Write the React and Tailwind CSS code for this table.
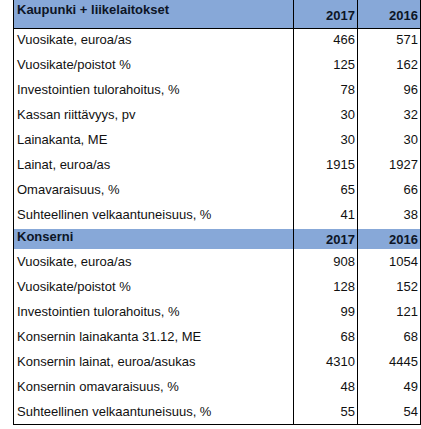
const kaupunki = [
  ['Vuosikate, euroa/as', '466', '571'],
  ['Vuosikate/poistot %', '125', '162'],
  ['Investointien tulorahoitus, %', '78', '96'],
  ['Kassan riittävyys, pv', '30', '32'],
  ['Lainakanta, ME', '30', '30'],
  ['Lainat, euroa/as', '1915', '1927'],
  ['Omavaraisuus, %', '65', '66'],
  ['Suhteellinen velkaantuneisuus, %', '41', '38'],
]

const konserni = [
  ['Vuosikate, euroa/as', '908', '1054'],
  ['Vuosikate/poistot %', '128', '152'],
  ['Investointien tulorahoitus, %', '99', '121'],
  ['Konsernin lainakanta 31.12, ME', '68', '68'],
  ['Konsernin lainat, euroa/asukas', '4310', '4445'],
  ['Konsernin omavaraisuus, %', '48', '49'],
  ['Suhteellinen velkaantuneisuus, %', '55', '54'],
]

function Row({ label, a, b, lift }) {
  const pad = lift ? 'pb-[4px]' : 'pt-[1px]'
  return (
    <div className="grid h-[25px] grid-cols-[279px_64px_63px]">
      <div className={`flex items-center pl-[3px] ${pad}`}>{label}</div>
      <div className={`flex items-center justify-end border-l border-black pr-[2px] ${pad}`}>{a}</div>
      <div className={`flex items-center justify-end border-l border-black pr-[2px] ${pad}`}>{b}</div>
    </div>
  )
}

function Header({ title, tall }) {
  return (
    <div
      className={`grid grid-cols-[279px_64px_63px] bg-[#87a8d8] font-bold text-[#0d1526] ${
        tall ? 'h-[29px] border-b border-black' : 'h-[20px]'
      }`}
    >
      <div className={`pl-[3px] ${tall ? 'pt-[2px]' : 'pt-0'}`}>{title}</div>
      <div className={`flex items-end justify-end border-l border-black pr-[2px] ${tall ? 'pb-[4px]' : 'pb-[1px]'}`}>
        2017
      </div>
      <div className={`flex items-end justify-end border-l border-black pr-[2px] ${tall ? 'pb-[4px]' : 'pb-[1px]'}`}>
        2016
      </div>
    </div>
  )
}

export default function App() {
  return (
    <div className="h-[429px] w-[421px] overflow-hidden bg-white">
      <div
        className="ml-[13px] w-[408px] border-x border-b border-black text-[13px] leading-[16px] text-[#111]"
        style={{ fontFamily: '"Liberation Sans", Arial, sans-serif' }}
      >
        <Header title="Kaupunki + liikelaitokset" tall />
        {kaupunki.map(([l, a, b]) => (
          <Row key={l} label={l} a={a} b={b} lift />
        ))}
        <Header title="Konserni" />
        {konserni.map(([l, a, b]) => (
          <Row key={'k' + l} label={l} a={a} b={b} />
        ))}
      </div>
    </div>
  )
}
